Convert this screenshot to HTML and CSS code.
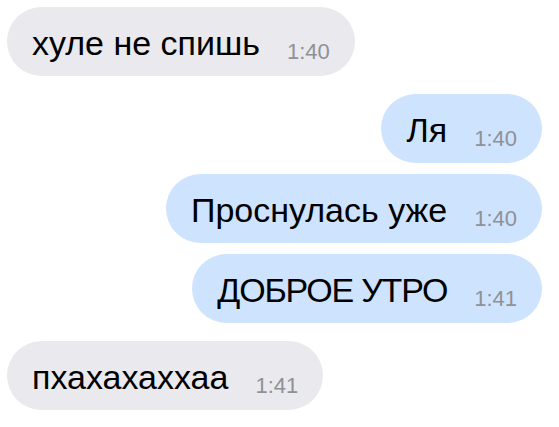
FILE: index.html
```html
<!DOCTYPE html>
<html lang="ru">
<head>
<meta charset="utf-8">
<title>Чат</title>
<link rel="stylesheet" href="styles.css">
</head>
<body>
<div class="chat">
  <div class="row in">
    <div class="bubble"><span class="text">хуле не спишь</span><span class="time">1:40</span></div>
  </div>
  <div class="row out first">
    <div class="bubble"><span class="text">Ля</span><span class="time">1:40</span></div>
  </div>
  <div class="row out">
    <div class="bubble"><span class="text">Проснулась уже</span><span class="time">1:40</span></div>
  </div>
  <div class="row out">
    <div class="bubble"><span class="text caps">ДОБРОЕ УТРО</span><span class="time">1:41</span></div>
  </div>
  <div class="row in first">
    <div class="bubble"><span class="text">пхахахаххаа</span><span class="time">1:41</span></div>
  </div>
</div>
</body>
</html>
```
FILE: styles.css
```css
html, body {
  margin: 0;
  padding: 0;
  background: #ffffff;
}

.chat {
  display: flex;
  flex-direction: column;
  gap: 11px;
  padding: 7px 17px 0 7px;
  font-family: "Liberation Sans", Arial, sans-serif;
}

.row {
  display: flex;
}

.row.first {
  margin-top: 7px;
}

.row.in {
  justify-content: flex-start;
}

.row.out {
  justify-content: flex-end;
}

.bubble {
  height: 69px;
  box-sizing: border-box;
  border-radius: 35px;
  padding: 3px 25px 0 25px;
  display: flex;
  align-items: baseline;
  line-height: 66px;
}

.row.in .bubble {
  background: #e9e9ee;
}

.row.out .bubble {
  background: #cee3fd;
}

.text {
  font-size: 34px;
  color: #000000;
}

.text.caps {
  letter-spacing: -1.2px;
}

.time {
  font-size: 22px;
  color: #8e9197;
  margin-left: 27px;
  position: relative;
  top: 4px;
}
```
